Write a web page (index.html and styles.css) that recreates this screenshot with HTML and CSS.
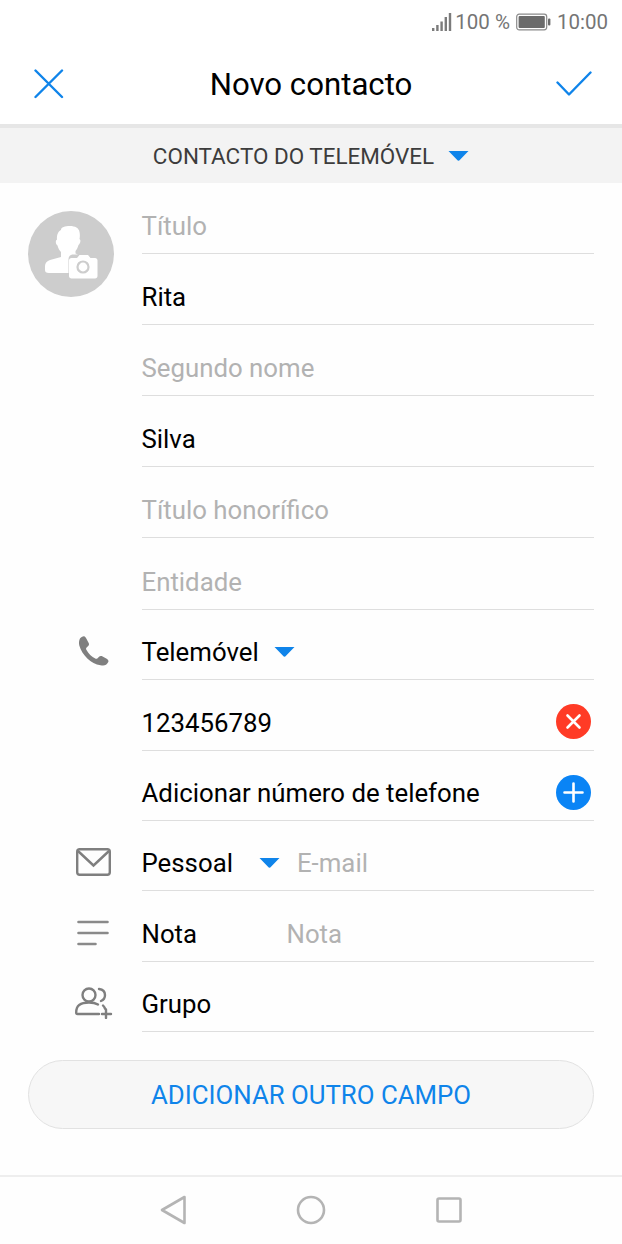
FILE: index.html
```html
<!DOCTYPE html>
<html lang="pt">
<head>
<meta charset="utf-8">
<title>Novo contacto</title>
<link rel="stylesheet" href="styles.css">
</head>
<body>
<div class="screen">
  <div class="status">
    <svg class="signal" width="20" height="20" viewBox="0 0 20 20"><g fill="#7b7b7b"><rect x="0" y="16" width="2.4" height="3"/><rect x="4.2" y="13" width="2.4" height="6"/><rect x="8.4" y="9.5" width="2.4" height="9.5"/><rect x="12.6" y="5" width="2.4" height="14"/><rect x="16.8" y="1" width="2.4" height="18"/></g></svg>
    <span class="pct">100 %</span>
    <svg class="battery" width="35" height="18" viewBox="0 0 35 18"><rect x="0.7" y="1.2" width="30" height="15.6" rx="2.5" fill="none" stroke="#8a8a8a" stroke-width="1.2"/><rect x="2.6" y="3" width="26.2" height="12" rx="1" fill="#6b6b6b"/><rect x="32" y="5.5" width="2.4" height="7" rx="1" fill="#6b6b6b"/></svg>
    <span class="time">10:00</span>
  </div>
  <header class="topbar">
    <svg class="top-x" width="30" height="30" viewBox="0 0 30 30"><path d="M1.500 1.500 28 28M28 1.500 1.500 28" stroke="#0f84ea" stroke-width="2.400" stroke-linecap="round" fill="none"/></svg>
    <h1 class="title">Novo contacto</h1>
    <svg class="top-check" width="36" height="26" viewBox="0 0 36 26"><path d="M1.500 11.500 13 23.500 34.500 1.500" stroke="#0f84ea" stroke-width="2.400" stroke-linecap="round" stroke-linejoin="round" fill="none"/></svg>
  </header>
  <div class="account">
    <span>CONTACTO DO TELEMÓVEL</span>
    <svg class="caret" width="21" height="10" viewBox="0 0 21 10"><path d="M0.500 0h20L12 8.800a2 2 0 0 1-3 0Z" fill="#0f84ea"/></svg>
  </div>
  <main class="form">
    <section class="name-group">
      <div class="avatar-col">
        <svg class="avatar" width="86" height="86" viewBox="0 0 86 86">
          <circle cx="43" cy="43" r="43" fill="#cdcdcd"/>
          <path d="M33 19c0-3 4-4 9-4s9 2 9.500 6c.5 2 .5 5 0 7l.8 1c.4 2-.6 4-1.800 5-.8 3-2 5-3 6v2.500L50 43.500H45c-2.500 0-4.500 2-4.500 4.500v14H21c-3 0-4-1-4-3v-4c0-3 2-5 5-6L33 46V41c-1.500-1.500-3-4-3.500-6.500-1.500-1-2-3-1.500-5l1-1C28.500 25 30 20 33 19Z" fill="#fff"/>
          <path d="M43.500 47h5.500L51.500 44h8.500l2.500 3h4.500c1.500 0 2.500 1 2.500 2.500V65c0 1.500-1 2.500-2.500 2.500H43.500c-1.500 0-2.500-1-2.500-2.500V49.500c0-1.500 1-2.500 2.500-2.500Z" fill="#fff"/>
          <circle cx="55" cy="56" r="5.500" fill="none" stroke="#cdcdcd" stroke-width="2.200"/>
        </svg>
      </div>
      <div class="name-fields">
        <div class="field h71"><span class="ph">Título</span></div>
        <div class="field h71"><span class="val">Rita</span></div>
        <div class="field h71"><span class="ph">Segundo nome</span></div>
        <div class="field h71"><span class="val">Silva</span></div>
        <div class="field h71"><span class="ph">Título honorífico</span></div>
        <div class="field h72"><span class="ph">Entidade</span></div>
      </div>
    </section>

    <div class="row">
      <div class="ico ico-phone">
        <svg width="32" height="32" viewBox="0 0 32 32"><path d="M3 3.500c.6-1 3-2.500 4-2.300 1 .2 1.600 1 2 1.800l2.800 5.300c.4.900.2 1.800-.4 2.500l-2 2c-.4.500-.5 1-.2 1.600 2.500 4.500 5 7 9.500 9.300.6.300 1.200.2 1.600-.2l2-2c.7-.6 1.500-.8 2.400-.4l5 2.700c1 .5 1.600 1.300 1.800 2.200 0 1-1.500 3.200-2.500 3.800-1.500 1-3.500 1-5.500.4C14 29 5 20 2.300 10.500 1.700 8 2 5 3 3.500Z" fill="#7f7f7f"/></svg>
      </div>
      <div class="field h70 sel"><span class="val">Telemóvel</span>
        <svg class="caret" width="21" height="10" viewBox="0 0 21 10"><path d="M0.500 0h20L12 8.800a2 2 0 0 1-3 0Z" fill="#0f84ea"/></svg>
      </div>
    </div>
    <div class="row">
      <div class="ico"></div>
      <div class="field h71 spread"><span class="val">123456789</span>
        <svg class="round" width="35" height="35" viewBox="0 0 35 35"><circle cx="17.500" cy="17.500" r="17.500" fill="#ff3b26"/><path d="M11.500 11.500 23.500 23.500M23.500 11.500 11.500 23.500" stroke="#fff" stroke-width="2.600" stroke-linecap="round"/></svg>
      </div>
    </div>
    <div class="row">
      <div class="ico"></div>
      <div class="field h70 spread"><span class="val">Adicionar número de telefone</span>
        <svg class="round" width="35" height="35" viewBox="0 0 35 35"><circle cx="17.500" cy="17.500" r="17.500" fill="#0a84f5"/><path d="M17.500 8.500v18M8.500 17.500h18" stroke="#fff" stroke-width="2.600" stroke-linecap="round"/></svg>
      </div>
    </div>
    <div class="row">
      <div class="ico ico-mail">
        <svg width="35" height="28" viewBox="0 0 35 28"><rect x="1.200" y="1.200" width="32.600" height="25.600" rx="2.500" fill="none" stroke="#7f7f7f" stroke-width="2.400"/><path d="M2 3 17.500 17.500 33 3" fill="none" stroke="#7f7f7f" stroke-width="2.400"/></svg>
      </div>
      <div class="field h70 email"><span class="val">Pessoal</span>
        <svg class="caret" width="21" height="10" viewBox="0 0 21 10"><path d="M0.500 0h20L12 8.800a2 2 0 0 1-3 0Z" fill="#0f84ea"/></svg>
        <span class="ph">E-mail</span>
      </div>
    </div>
    <div class="row">
      <div class="ico ico-note">
        <svg width="32" height="26" viewBox="0 0 32 26"><path d="M1.500 2h29M1.500 13h29M1.500 24h17" stroke="#8a8a8a" stroke-width="2.600" stroke-linecap="round" fill="none"/></svg>
      </div>
      <div class="field h71 note"><span class="val note-label">Nota</span><span class="ph">Nota</span></div>
    </div>
    <div class="row">
      <div class="ico">
        <svg width="38" height="32" viewBox="0 0 38 32"><g fill="none" stroke="#7f7f7f" stroke-width="2.400" stroke-linecap="round"><circle cx="14" cy="8" r="6.500"/><path d="M24 2c4 .5 6 3 6 6s-1.500 5-4 6"/><path d="M24 27H2.500c-1 0-1.300-.5-1.300-1.500 0-4 1-6 3-7.500 2-1.500 5-2.500 9.800-2.500 3 0 6.500.5 9 2"/><path d="M31 22.500v8.500M27 27h9"/><path d="M28 18.500c1 1 1.500 1.500 2 3"/></g></svg>
      </div>
      <div class="field h70"><span class="val">Grupo</span></div>
    </div>
    <div class="add-wrap"><button class="add">ADICIONAR OUTRO CAMPO</button></div>
  </main>
  <nav class="navbar">
    <svg width="26" height="30" viewBox="0 0 26 30"><path d="M24.500 2 2 15l22.500 13Z" fill="none" stroke="#b4b4b4" stroke-width="2.600" stroke-linejoin="round"/></svg>
    <svg width="30" height="30" viewBox="0 0 30 30"><circle cx="15" cy="15" r="13" fill="none" stroke="#b4b4b4" stroke-width="2.600"/></svg>
    <svg width="26" height="26" viewBox="0 0 26 26"><rect x="1.500" y="1.500" width="23" height="23" rx="1.500" fill="none" stroke="#b4b4b4" stroke-width="2.600"/></svg>
  </nav>
</div>
</body>
</html>
```
FILE: styles.css
```css
* { box-sizing: border-box; }
html, body { margin: 0; padding: 0; }
body { font-family: Roboto, "Liberation Sans", sans-serif; background: #fff; }
.screen { width: 622px; height: 1244px; display: flex; flex-direction: column; background: #fefefe; overflow: hidden; }

.status { height: 44px; display: flex; align-items: center; justify-content: flex-end; padding: 0 14px 0 0; color: #757575; font-size: 20.500px; background: #fff; }
.signal { margin-right: 3px; }
.pct { margin-right: 6px; }
.battery { margin-right: 6px; }

.topbar { height: 80px; display: flex; align-items: center; justify-content: space-between; padding: 0 30px 0 33px; position: relative; background: #fff; }
.title { position: absolute; left: 0; right: 0; top: 22px; margin: 0; text-align: center; font-size: 31.200px; line-height: 37px; font-weight: 400; color: #000; }
.top-x { position: relative; left: 1px; }
.top-check { position: relative; }

.account { height: 59px; border-top: 4px solid #e6e6e6; background: #f3f3f3; display: flex; align-items: center; justify-content: center; gap: 14px; color: #3c3c3c; font-size: 22.450px; padding-top: 1px; }

.form { flex: 1; display: flex; flex-direction: column; }
.name-group { display: flex; }
.avatar-col { width: 142px; padding: 28px 0 0 28px; flex: none; }
.avatar { display: block; }
.name-fields { flex: 1; }

.row { display: flex; }
.ico { width: 142px; flex: none; display: flex; align-items: center; justify-content: flex-start; padding: 12px 0 0 75px; }
.ico-phone { padding-left: 77px; }
.ico-mail { padding-left: 76px; }
.ico-note { padding-left: 77px; }
.field { margin-right: 28px; border-bottom: 1px solid #dedede; display: flex; align-items: center; font-size: 25.800px; padding-top: 15px; }
.field > span:first-child { margin-left: -0.500px; }
.row .field { flex: 1; }
.h70 { height: 70px; }
.h71 { height: 71px; }
.h72 { height: 72px; padding-top: 17px; }
.val { color: #000; }
.ph { color: #b2b2b2; }
.sel { gap: 15px; }
.spread { justify-content: space-between; padding-right: 3px; }
.email .caret { margin-left: 26px; }
.email .ph { margin-left: 17px; }
.note-label { width: 145px; }
.round { display: block; margin-top: -2px; }

.add-wrap { padding: 28px 28px 0; }
.add { width: 100%; height: 69px; border-radius: 35px; border: 1px solid #e2e2e2; background: #f7f7f7; color: #0f84ea; font-family: inherit; font-size: 25.800px; padding: 0; }

.navbar { height: 69px; border-top: 2px solid #eeeeee; display: flex; align-items: center; justify-content: center; padding-bottom: 2px; }
.navbar svg:nth-child(1) { margin-right: 110px; }
.navbar svg:nth-child(2) { margin-right: 110px; }
```
